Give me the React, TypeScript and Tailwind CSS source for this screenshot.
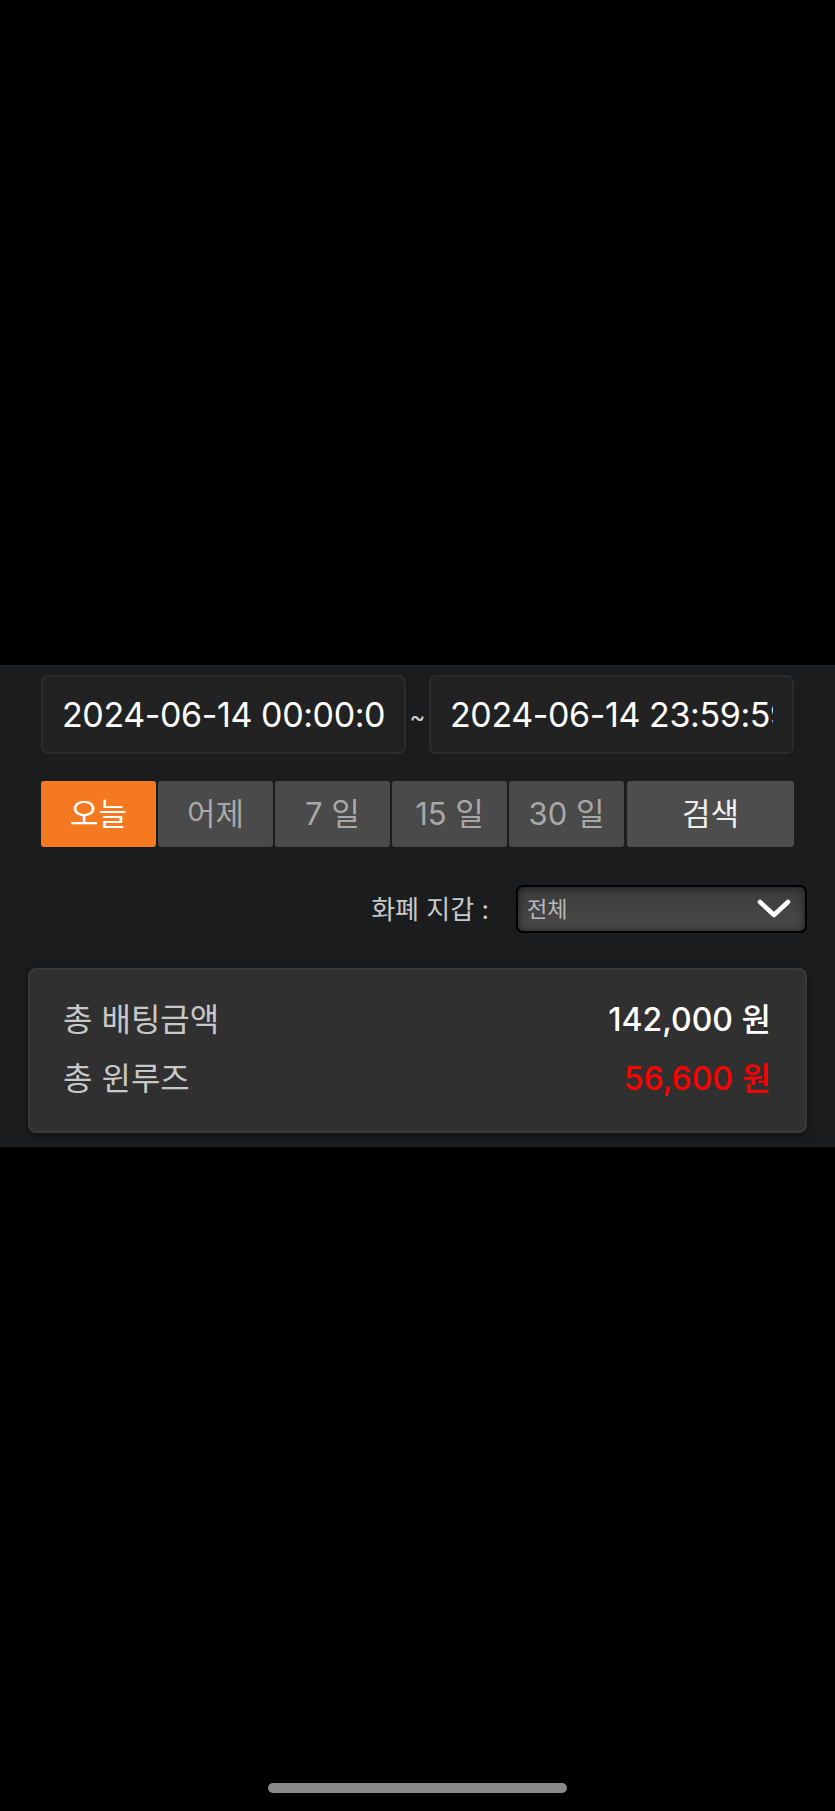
const FONT = "font-['Inter','Noto_Sans_CJK_KR',sans-serif]";

const PERIODS = ["오늘", "어제", "7 일", "15 일", "30 일"];

function DateInput({ value }: { value: string }) {
  return (
    <input
      readOnly
      value={value}
      className={`h-[79px] min-w-0 flex-1 rounded-[7px] border-2 border-[#2b2b2b] bg-[#222222] px-[19px] text-[34px] tracking-[-0.4px] text-white outline-none ${FONT}`}
    />
  );
}

export default function App() {
  return (
    <div className={`flex min-h-[1811px] w-full flex-col bg-black ${FONT}`}>
      <div className="h-[665px]" />
      <section className="flex h-[482px] flex-col bg-[#1a1c1e] px-[28px] pt-[10px]">
        <div className="flex items-center px-[13px]">
          <DateInput value="2024-06-14 00:00:00" />
          <span className="w-[23px] pt-[4px] text-center text-[24px] text-[#cccccc]">~</span>
          <DateInput value="2024-06-14 23:59:59" />
        </div>

        <div className="mt-[27px] flex gap-[2px] px-[13px]">
          {PERIODS.map((p, i) => (
            <button
              key={p}
              className={
                i === 0
                  ? "h-[66px] w-[115px] rounded-[3px] bg-[#f47920] text-[31px] text-white"
                  : "h-[66px] w-[115px] rounded-[3px] bg-[#4a4a4a] text-[31px] text-[#a8a8a8]"
              }
            >
              {p}
            </button>
          ))}
          <button className="ml-[1px] h-[66px] flex-1 rounded-[3px] bg-[#4d4d4d] text-[31px] text-[#eeeeee]">
            검색
          </button>
        </div>

        <div className="mt-[38px] flex items-center justify-end">
          <span className="mr-[27px] text-[26px] text-[#c8c8c8]">화폐 지갑 :</span>
          <div className="flex h-[48px] w-[291px] items-center justify-between rounded-[7px] border-2 border-black bg-[linear-gradient(#3c3c3c,#4a4a4a)] pl-[9px] pr-[14px] shadow-[inset_0_0_8px_rgba(0,0,0,0.6)]">
            <span className="text-[22px] text-[#b8b8b8]">전체</span>
            <svg width="34" height="20" viewBox="0 0 34 20" fill="none">
              <path d="M3 3 L17 16 L31 3" stroke="white" strokeWidth="4.5" strokeLinecap="round" strokeLinejoin="round" />
            </svg>
          </div>
        </div>

        <div className="mt-[35px] flex h-[165px] flex-col justify-center gap-[22px] rounded-[8px] border-2 border-[#3a3a3a] bg-[#303030] pb-[4px] pl-[33px] pr-[34px] shadow-[0_2px_6px_rgba(0,0,0,0.5)]">
          <div className="flex items-center justify-between text-[32px] leading-[37px]">
            <span className="text-[#c8c8c8]">총 배팅금액</span>
            <span className="font-medium text-white">142,000 원</span>
          </div>
          <div className="flex items-center justify-between text-[32px] leading-[37px]">
            <span className="text-[#c8c8c8]">총 윈루즈</span>
            <span className="font-medium text-[#ff0000]">56,600 원</span>
          </div>
        </div>
      </section>
      <div className="flex flex-1 items-end justify-center pb-[18px]">
        <div className="h-[10px] w-[299px] rounded-full bg-[#8a8a8a]" />
      </div>
    </div>
  );
}
